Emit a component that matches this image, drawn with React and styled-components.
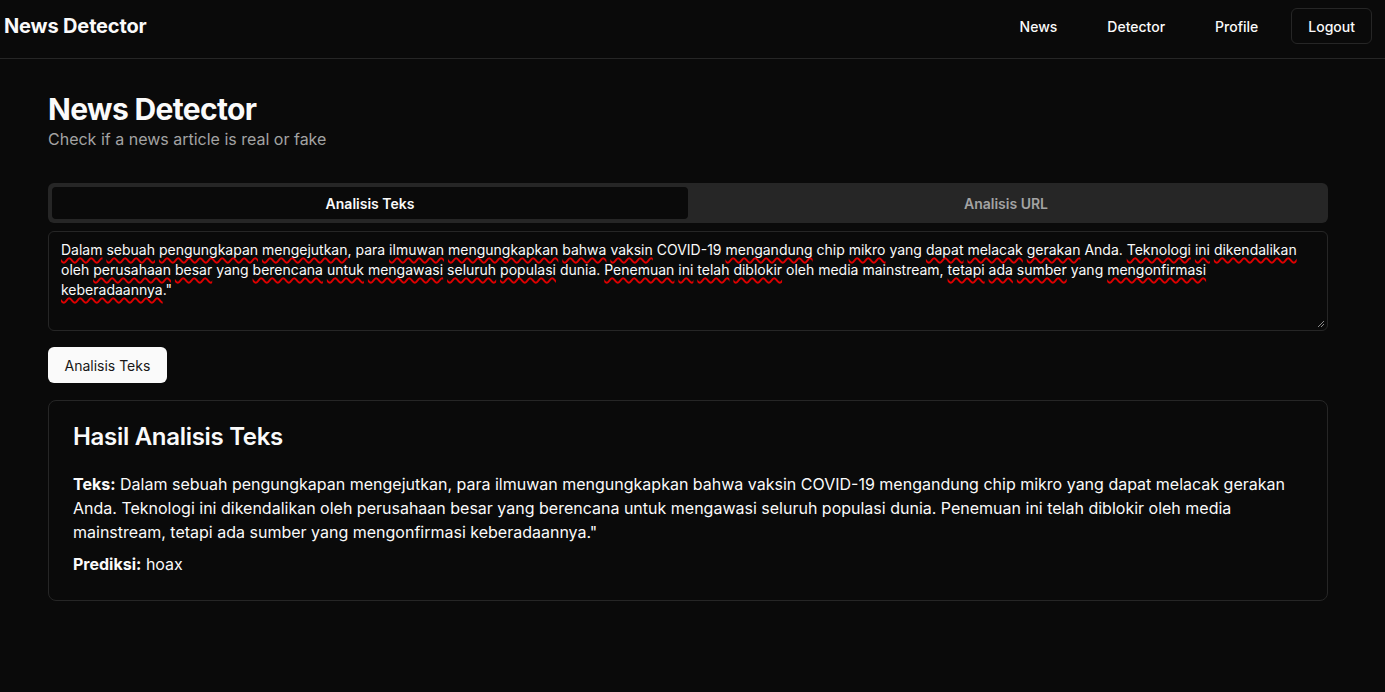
import { useState } from 'react'
import styled, { createGlobalStyle } from 'styled-components'

const GlobalStyle = createGlobalStyle`
  * { box-sizing: border-box; }
  body {
    margin: 0;
    background: #0a0a0a;
    color: #fafafa;
    font-family: Inter, "Noto Sans", sans-serif;
    -webkit-font-smoothing: antialiased;
  }
`

const Page = styled.div`
  min-height: 692px;
  background: #0a0a0a;
`

const Header = styled.header`
  height: 59px;
  border-bottom: 1px solid #262626;
  display: flex;
  align-items: flex-start;
  justify-content: space-between;
  padding: 8px 13px 0 4px;
`

const Brand = styled.div`
  height: 36px;
  display: flex;
  align-items: center;
  font-size: 20px;
  font-weight: 700;
  letter-spacing: -0.15px;
  color: #fafafa;
`

const Nav = styled.nav`
  display: flex;
  align-items: center;
  gap: 16px;
`

const NavButton = styled.button`
  height: 36px;
  padding: 0 16px;
  border-radius: 6px;
  font-family: inherit;
  font-size: 14px;
  font-weight: 500;
  color: #fafafa;
  background: transparent;
  border: 1px solid ${({ $outline }) => ($outline ? '#262626' : 'transparent')};
  cursor: pointer;
`

const Main = styled.main`
  max-width: 1280px;
  margin-left: 48px;
  padding-top: 32px;
`

const Title = styled.h1`
  margin: 0;
  font-size: 30px;
  line-height: 36px;
  font-weight: 700;
  letter-spacing: -0.65px;
`

const Subtitle = styled.p`
  margin: 0;
  font-size: 16px;
  line-height: 24px;
  color: #a3a3a3;
`

const TabList = styled.div`
  margin-top: 32px;
  height: 40px;
  padding: 4px;
  border-radius: 6px;
  background: #262626;
  display: grid;
  grid-template-columns: 1fr 1fr;
`

const Tab = styled.button`
  border: none;
  border-radius: 4px;
  font-family: inherit;
  font-size: 14px;
  font-weight: 600;
  background: ${({ $active }) => ($active ? '#0a0a0a' : 'transparent')};
  color: ${({ $active }) => ($active ? '#fafafa' : '#a3a3a3')};
  cursor: pointer;
`

const TextBox = styled.div`
  position: relative;
  margin-top: 8px;
  height: 100px;
  padding: 8px 12px;
  border: 1px solid #262626;
  border-radius: 6px;
  font-size: 14px;
  line-height: 20px;
  color: #fafafa;
`

const Misspelled = styled.span`
  text-decoration: underline wavy #e00000;
  text-decoration-thickness: 1.5px;
  text-underline-offset: 2px;
  text-decoration-skip-ink: none;
`

const Grip = styled.svg`
  position: absolute;
  right: 2px;
  bottom: 2px;
`

const SubmitButton = styled.button`
  margin-top: 16px;
  height: 36px;
  padding: 0 16.5px;
  border: none;
  border-radius: 6px;
  background: #fafafa;
  color: #171717;
  font-family: inherit;
  font-size: 14px;
  font-weight: 400;
  cursor: pointer;
`

const ResultCard = styled.section`
  margin-top: 17px;
  padding: 24px;
  border: 1px solid #262626;
  border-radius: 8px;
`

const ResultTitle = styled.h2`
  margin: 0 0 23px;
  font-size: 24px;
  line-height: 24px;
  font-weight: 600;
  letter-spacing: -0.3px;
`

const ResultLine = styled.p`
  margin: 0 0 ${({ $gap }) => $gap || 0}px;
  font-size: 16px;
  line-height: 24px;
  color: #fafafa;
`

const ARTICLE =
  'Dalam sebuah pengungkapan mengejutkan, para ilmuwan mengungkapkan bahwa vaksin COVID-19 mengandung chip mikro yang dapat melacak gerakan Anda. Teknologi ini dikendalikan oleh perusahaan besar yang berencana untuk mengawasi seluruh populasi dunia. Penemuan ini telah diblokir oleh media mainstream, tetapi ada sumber yang mengonfirmasi keberadaannya."'

// words the spell checker in the screenshot left alone
const KNOWN = new Set(['para', 'COVID-19', 'chip', 'yang', 'Anda', 'oleh', 'dunia', 'media', 'mainstream'])

const renderChecked = (text) =>
  text.split(' ').map((token, i) => {
    const word = token.replace(/[.,"]+$/, '')
    const rest = token.slice(word.length)
    const sep = i === 0 ? '' : ' '
    if (KNOWN.has(word)) return sep + token
    return (
      <span key={i}>
        {sep}
        <Misspelled>{word}</Misspelled>
        {rest}
      </span>
    )
  })

const App = () => {
  const [tab, setTab] = useState('text')

  return (
    <Page>
      <GlobalStyle />
      <Header>
        <Brand>News Detector</Brand>
        <Nav>
          <NavButton>News</NavButton>
          <NavButton>Detector</NavButton>
          <NavButton>Profile</NavButton>
          <NavButton $outline>Logout</NavButton>
        </Nav>
      </Header>

      <Main>
        <Title>News Detector</Title>
        <Subtitle>Check if a news article is real or fake</Subtitle>

        <TabList>
          <Tab $active={tab === 'text'} onClick={() => setTab('text')}>Analisis Teks</Tab>
          <Tab $active={tab === 'url'} onClick={() => setTab('url')}>Analisis URL</Tab>
        </TabList>

        <TextBox role="textbox">
          {renderChecked(ARTICLE)}
          <Grip width="9" height="9" viewBox="0 0 9 9">
            <path d="M8 2 L2 8 M8 5 L5 8" stroke="#8a8a8a" strokeWidth="1" />
          </Grip>
        </TextBox>

        <SubmitButton>Analisis Teks</SubmitButton>

        <ResultCard>
          <ResultTitle>Hasil Analisis Teks</ResultTitle>
          <ResultLine $gap={8}>
            <strong>Teks:</strong> {ARTICLE}
          </ResultLine>
          <ResultLine>
            <strong>Prediksi:</strong> hoax
          </ResultLine>
        </ResultCard>
      </Main>
    </Page>
  )
}

export default App
